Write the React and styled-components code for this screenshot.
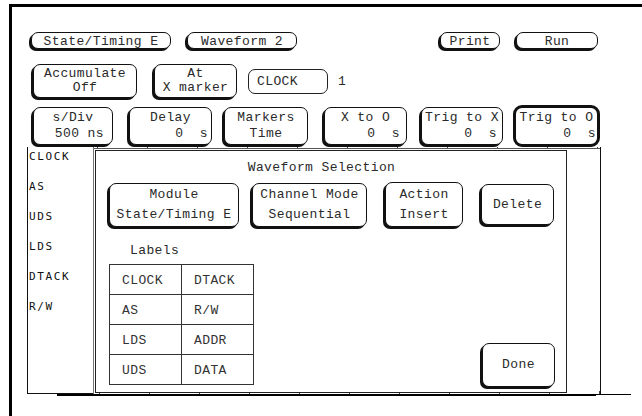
import React from "react";
import styled, { createGlobalStyle } from "styled-components";

const GlobalStyle = createGlobalStyle`
  html, body {
    margin: 0;
    padding: 0;
    background: #fff;
    overflow: hidden;
  }
  body {
    font-family: "Liberation Mono", "DejaVu Sans Mono", monospace;
    font-size: 13px;
    letter-spacing: 0.4px;
    color: #2a2a2a;
  }
`;

const traceLabels = ["CLOCK", "AS", "UDS", "LDS", "DTACK", "R/W"];

const labelPairs = [
  ["CLOCK", "DTACK"],
  ["AS", "R/W"],
  ["LDS", "ADDR"],
  ["UDS", "DATA"],
];

const readouts = [
  { title: "s/Div", value: "500 ns", w: 80, ml: 0, pr: 8 },
  { title: "Delay", value: "0  s", w: 83, ml: 16, pr: 3 },
  { title: "Markers", value: "Time", w: 84, ml: 12, center: true },
  { title: "X to O", value: "0  s", w: 83, ml: 16, pr: 6 },
  { title: "Trig to X", value: "0  s", w: 82, ml: 14, pr: 5 },
  { title: "Trig to O", value: "0  s", w: 87, ml: 10, pr: 1, active: true },
];

const App = () => (
  <>
    <GlobalStyle />
    <Screen>
      <TopRow>
        <Key $w={140} $h={17} $pt={2}>State/Timing E</Key>
        <Key $w={110} $h={17} $pt={2} $ml={16}>Waveform 2</Key>
        <Spacer />
        <Key $w={60} $h={17} $pt={2}>Print</Key>
        <Key $w={82} $h={17} $pt={2} $ml={16}>Run</Key>
      </TopRow>

      <ModeRow>
        <Key $w={104} $h={34}>
          <Line>Accumulate</Line>
          <Line>Off</Line>
        </Key>
        <Key $w={83} $h={34} $ml={17}>
          <Line>At</Line>
          <Line>X marker</Line>
        </Key>
        <Field>CLOCK</Field>
        <Count>1</Count>
      </ModeRow>

      <ReadoutRow>
        {readouts.map((r) => (
          <Key
            key={r.title}
            $w={r.w}
            $h={r.active ? 42 : 38}
            $ml={r.ml}
            $lh={16}
            $active={r.active}
          >
            <Line>{r.title}</Line>
            <Line $right={!r.center} $pr={r.pr}>
              {r.value}
            </Line>
          </Key>
        ))}
      </ReadoutRow>

      <Main>
        <LabelColumn>
          {traceLabels.map((l) => (
            <TraceLabel key={l}>{l}</TraceLabel>
          ))}
        </LabelColumn>

        <WaveArea>
          <Dialog>
            <DialogTitle>Waveform Selection</DialogTitle>
            <DialogButtons>
              <Key $w={130} $h={44} $lh={20}>
                <Line>Module</Line>
                <Line>State/Timing E</Line>
              </Key>
              <Key $w={115} $h={44} $ml={13} $lh={20}>
                <Line>Channel Mode</Line>
                <Line>Sequential</Line>
              </Key>
              <Key $w={78} $h={45} $ml={18} $lh={20}>
                <Line>Action</Line>
                <Line>Insert</Line>
              </Key>
              <Key $w={73} $h={41} $ml={18}>
                Delete
              </Key>
            </DialogButtons>

            <DialogBottom>
              <div>
                <Caption>Labels</Caption>
                <LabelTable>
                  {labelPairs.flat().map((l) => (
                    <Cell key={l}>{l}</Cell>
                  ))}
                </LabelTable>
              </div>
              <Key $w={73} $h={44}>
                Done
              </Key>
            </DialogBottom>
          </Dialog>
        </WaveArea>
      </Main>

      <Baseline>
        <ThickRule />
        <ThinRule />
      </Baseline>
    </Screen>
  </>
);

const Screen = styled.div`
  margin: 4px 0 0 9px;
  height: 412px;
  box-sizing: border-box;
  border-top: 3px solid #000;
  border-left: 3px solid #000;
  padding-top: 25px;
`;

const TopRow = styled.div`
  display: flex;
  align-items: center;
  height: 17px;
  margin: 0 44px 0 19px;
`;

const Spacer = styled.div`
  flex: 1;
`;

const ModeRow = styled.div`
  display: flex;
  align-items: center;
  height: 34px;
  margin: 15px 0 0 21px;
`;

const ReadoutRow = styled.div`
  display: flex;
  align-items: center;
  height: 42px;
  margin: 7px 0 0 21px;
`;

const Key = styled.div`
  box-sizing: border-box;
  flex: none;
  width: ${(p) => p.$w}px;
  height: ${(p) => p.$h}px;
  margin-left: ${(p) => p.$ml || 0}px;
  padding-top: ${(p) => p.$pt || 0}px;
  display: flex;
  flex-direction: column;
  justify-content: center;
  border: ${(p) => (p.$active ? 3 : 1)}px solid #111;
  border-radius: ${(p) => (p.$active ? 9 : 7)}px;
  box-shadow: ${(p) => (p.$active ? "none" : "-2px 2px 0 #111")};
  background: #fff;
  line-height: ${(p) => p.$lh || 14}px;
  text-align: center;
  white-space: pre;
`;

const Line = styled.div`
  text-align: ${(p) => (p.$right ? "right" : "center")};
  padding-right: ${(p) => (p.$right ? p.$pr : 0)}px;
`;

const Field = styled.div`
  box-sizing: border-box;
  width: 80px;
  height: 25px;
  margin-left: 11px;
  padding-left: 8px;
  border: 1px solid #222;
  border-radius: 7px;
  line-height: 23px;
`;

const Count = styled.span`
  margin-left: 10px;
`;

const Main = styled.div`
  display: flex;
  height: 247px;
  margin-left: 15px;
`;

const LabelColumn = styled.div`
  box-sizing: border-box;
  width: 66px;
  padding: 3px 0 0 1px;
  border-left: 1px solid #111;
  border-bottom: 1px solid #111;
  font-family: "DejaVu Sans Mono", monospace;
  font-size: 11px;
  letter-spacing: 1.6px;
  color: #111;
`;

const TraceLabel = styled.div`
  height: 30px;
  line-height: 14px;
`;

const WaveArea = styled.div`
  box-sizing: border-box;
  width: 508px;
  padding: 3px 0 1px 1px;
  border-left: 1px solid #777;
  border-right: 1px solid #111;
  background:
    linear-gradient(#555, #555) 0 1px / 100% 1px no-repeat,
    repeating-linear-gradient(90deg, #444 0 1px, transparent 1px 50px) 3px 0 / 100% 2px no-repeat,
    repeating-linear-gradient(90deg, #444 0 1px, transparent 1px 50px) 5px 100% / 100% 3px no-repeat;
`;

const Dialog = styled.div`
  box-sizing: border-box;
  width: 472px;
  height: 243px;
  padding: 10px 11px 5px 13px;
  border: 1px solid #222;
  background: #fff;
  display: flex;
  flex-direction: column;
`;

const DialogTitle = styled.div`
  line-height: 14px;
  text-align: center;
  padding-right: 21px;
`;

const DialogButtons = styled.div`
  display: flex;
  align-items: center;
  height: 45px;
  margin-top: 7px;
`;

const DialogBottom = styled.div`
  display: flex;
  align-items: flex-end;
  justify-content: space-between;
  margin-top: auto;
`;

const Caption = styled.div`
  line-height: 14px;
  padding-left: 21px;
`;

const LabelTable = styled.div`
  display: grid;
  grid-template-columns: 72px 72px;
  grid-auto-rows: 30px;
  width: 145px;
  margin: 6px 0 2px;
  border-top: 1px solid #333;
  border-left: 1px solid #333;
  box-sizing: border-box;
  color: #333;
`;

const Cell = styled.div`
  box-sizing: border-box;
  padding: 9px 0 0 12px;
  line-height: 14px;
  border-right: 1px solid #333;
  border-bottom: 1px solid #333;
`;

const Baseline = styled.div`
  display: flex;
  align-items: flex-start;
  margin-left: 45px;
`;

const ThickRule = styled.div`
  width: 539px;
  height: 2px;
  background: #000;
`;

const ThinRule = styled.div`
  width: 35px;
  height: 1px;
  background: #000;
`;

export default App;
